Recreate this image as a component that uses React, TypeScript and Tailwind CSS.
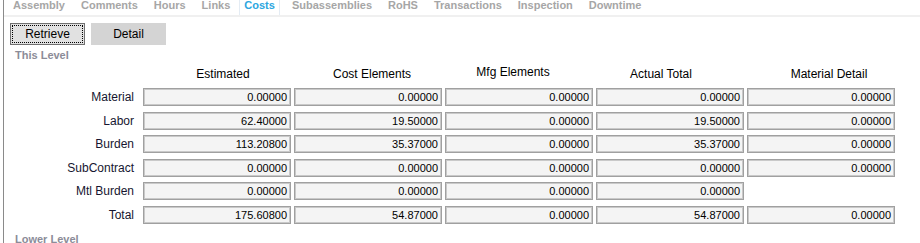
import React from 'react';

const tabs = ['Assembly', 'Comments', 'Hours', 'Links', 'Costs', 'Subassemblies', 'RoHS', 'Transactions', 'Inspection', 'Downtime'];

// header captions are not exactly centered over their fields in the original form
const columns = [
    { title: 'Estimated', cls: 'relative left-[6px]' },
    { title: 'Cost Elements', cls: 'relative left-[4px]' },
    { title: 'Mfg Elements', cls: 'relative -left-[6px] -top-[2px]' },
    { title: 'Actual Total', cls: 'relative -left-[9px]' },
    { title: 'Material Detail', cls: 'relative left-[8px]' },
];

const rows: { label: string; values: (string | null)[] }[] = [
    { label: 'Material', values: ['0.00000', '0.00000', '0.00000', '0.00000', '0.00000'] },
    { label: 'Labor', values: ['62.40000', '19.50000', '0.00000', '19.50000', '0.00000'] },
    { label: 'Burden', values: ['113.20800', '35.37000', '0.00000', '35.37000', '0.00000'] },
    { label: 'SubContract', values: ['0.00000', '0.00000', '0.00000', '0.00000', '0.00000'] },
    { label: 'Mtl Burden', values: ['0.00000', '0.00000', '0.00000', '0.00000', null] },
    { label: 'Total', values: ['175.60800', '54.87000', '0.00000', '54.87000', '0.00000'] },
];

export default function App() {
    return (
        <div className="w-[920px] h-[243px] overflow-hidden bg-white" style={{ fontFamily: '"Liberation Sans", Arial, sans-serif' }}>
            <div className="ml-[3px] h-full border-l border-[#8a8a8a] flex flex-col">
                {/* Tabs */}
                <div className="h-[17px] flex items-start border-b-2 border-[#f0f0f0] pl-[1px]">
                    {tabs.map(t =>
                        t === 'Costs' ? (
                            <div key={t} className="ml-[1px] mr-[4px] h-[15px] px-[4px] border-x border-[#e4ecf4]">
                                <span className="block -mt-[1px] text-[11px] leading-[13px] font-bold text-[#2ca6e0]">{t}</span>
                            </div>
                        ) : (
                            <div key={t} className="h-[15px] px-2">
                                <span className="block -mt-[1px] text-[11px] leading-[13px] font-bold text-[#a6a6a6] whitespace-nowrap">{t}</span>
                            </div>
                        )
                    )}
                </div>

                {/* Buttons */}
                <div className="mt-[6px] ml-[6px] flex gap-[6px]">
                    <button className="w-[75px] h-[22px] border border-[#707070] bg-[#e1e1e1] p-[1px]">
                        <div className="h-full w-full border border-dotted border-black flex items-center justify-center text-[12px] text-black">
                            Retrieve
                        </div>
                    </button>
                    <button className="w-[75px] h-[22px] bg-[#d4d4d4] flex items-center justify-center text-[12px] text-black">
                        Detail
                    </button>
                </div>

                <div className="mt-[4px] ml-[11px] text-[11px] leading-[13px] font-bold text-[#8c8c98]">This Level</div>

                {/* Grid */}
                <div className="mt-[5px] grid grid-cols-[136px_148px_148px_148px_148px_148px] gap-x-[3px]">
                    <div className="h-[14px]" />
                    {columns.map(c => (
                        <div key={c.title} className="h-[14px] text-center text-[12px] leading-[14px] text-black whitespace-nowrap">
                            <span className={c.cls}>{c.title}</span>
                        </div>
                    ))}
                </div>
                <div className="mt-[7px] grid grid-cols-[136px_148px_148px_148px_148px_148px] gap-x-[3px] gap-y-[5.6px]">
                    {rows.map(r => (
                        <React.Fragment key={r.label}>
                            <div className="h-[18px] pr-[6px] text-right text-[12px] leading-[18px] text-[#161630] whitespace-nowrap">{r.label}</div>
                            {r.values.map((v, i) =>
                                v === null ? (
                                    <div key={i} className="h-[18px]" />
                                ) : (
                                    <div
                                        key={i}
                                        className="h-[18px] border border-[#a0a0a0] shadow-[inset_0_0_0_1px_#c9c9c9] bg-[#f4f4f4] pr-[3px] text-right text-[11px] leading-[16px] text-black"
                                    >
                                        {v}
                                    </div>
                                )
                            )}
                        </React.Fragment>
                    ))}
                </div>

                <div className="mt-[9px] ml-[11px] text-[11px] leading-[13px] font-bold text-[#8c8c98]">Lower Level</div>
            </div>
        </div>
    );
}
